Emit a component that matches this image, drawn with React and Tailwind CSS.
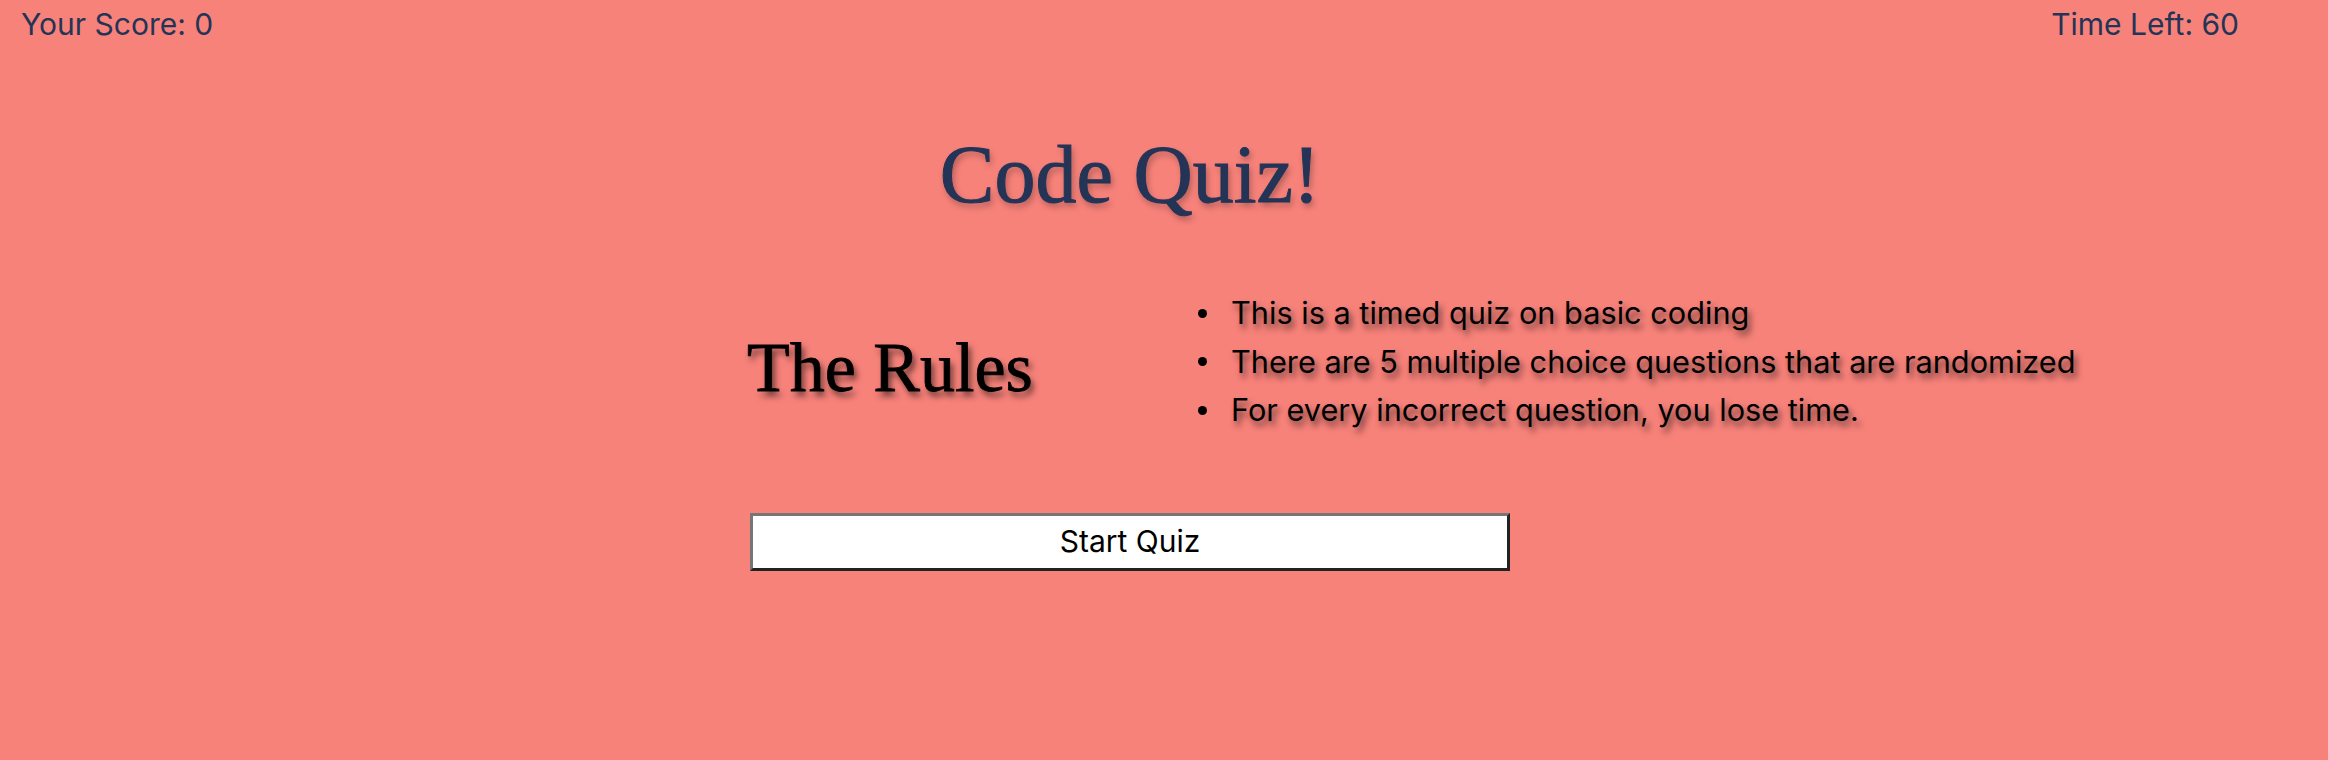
import React from "react";

const rules = [
  "This is a timed quiz on basic coding",
  "There are 5 multiple choice questions that are randomized",
  "For every incorrect question, you lose time.",
];

export default function App() {
  return (
    <div className="min-h-screen bg-[#f7827a] font-['Inter','Noto_Sans',sans-serif]">
      {/* Score / timer bar */}
      <header className="flex justify-between pl-[21px] pr-[89px] pt-[5px] text-[30px] leading-[38px] text-[#233456]">
        <span>Your Score: 0</span>
        <span>Time Left: 60</span>
      </header>

      <main className="w-[760px] ml-[750px]">
        <h1 className="mt-[91px] text-center font-['Liberation_Serif',serif] text-[82px] leading-none text-[#233456] [-webkit-text-stroke:1px_#233456] [text-shadow:2px_4px_6px_rgba(0,0,0,0.3)]">
          Code Quiz!
        </h1>

        {/* Rules */}
        <section className="mt-[73px] flex items-center">
          <h2 className="-ml-[3px] mt-[12px] w-[451px] shrink-0 font-['Liberation_Serif',serif] text-[70px] leading-none text-black [-webkit-text-stroke:0.8px_#000] [text-shadow:3px_5px_6px_rgba(0,0,0,0.6)]">
            The Rules
          </h2>
          <ul className="shrink-0 text-[30.7px] leading-[48.5px] text-black whitespace-nowrap [text-shadow:3px_5px_6px_rgba(0,0,0,0.6)]">
            {rules.map((rule) => (
              <li key={rule} className="flex items-center">
                <span className="mr-[24px] h-[9px] w-[9px] shrink-0 rounded-full bg-black" />
                {rule}
              </li>
            ))}
          </ul>
        </section>

        <button className="mt-[78px] block h-[58px] w-full border-[3px] border-t-[#767676] border-l-[#767676] border-b-[#222222] border-r-[#222222] bg-white text-[30px] text-black">
          Start Quiz
        </button>
      </main>
    </div>
  );
}
